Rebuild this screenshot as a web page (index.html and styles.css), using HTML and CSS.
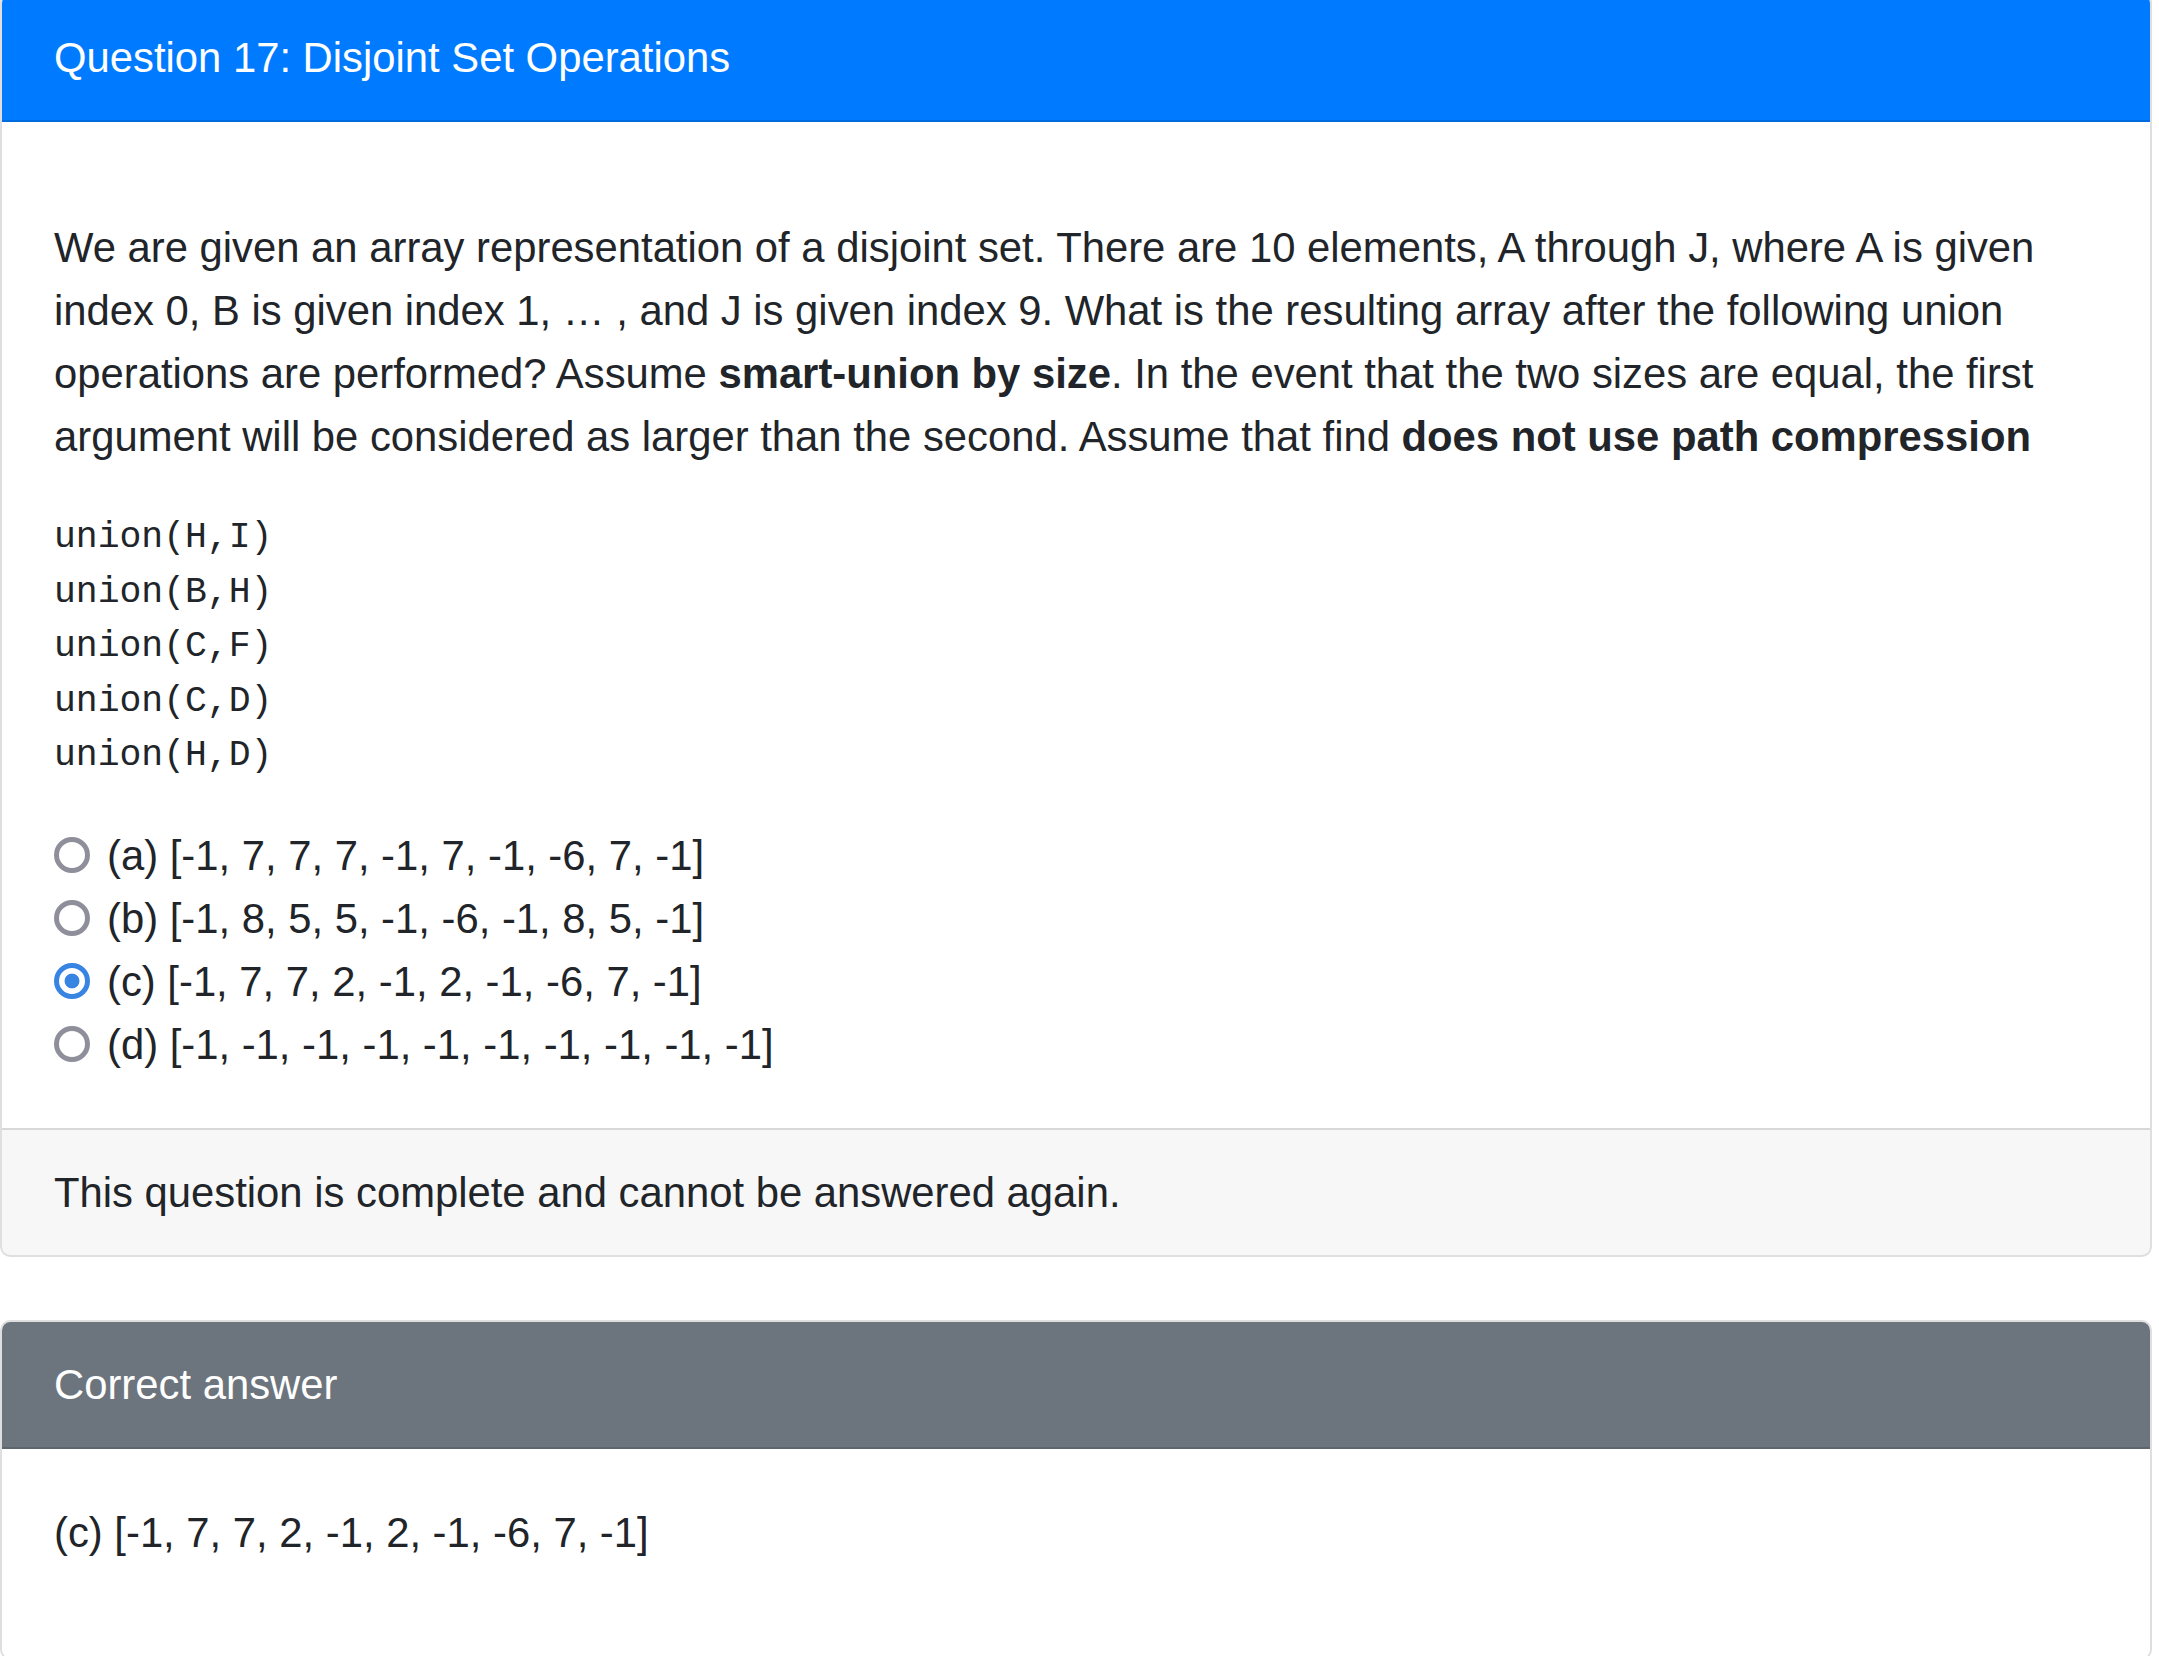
FILE: index.html
```html
<!DOCTYPE html>
<html lang="en">
<head>
<meta charset="utf-8">
<title>Question 17: Disjoint Set Operations</title>
<link rel="stylesheet" href="styles.css">
</head>
<body>
<div class="page">
  <section class="card">
    <div class="card-header header-primary">Question 17: Disjoint Set Operations</div>
    <div class="card-body">
      <p class="question">We are given an array representation of a disjoint set. There are 10 elements, A through J, where A is given index 0, B is given index 1, … , and J is given index 9. What is the resulting array after the following union operations are performed? Assume <strong>smart-union by size</strong>. In the event that the two sizes are equal, the first argument will be considered as larger than the second. Assume that find <strong>does not use path compression</strong></p>
<pre class="code">union(H,I)
union(B,H)
union(C,F)
union(C,D)
union(H,D)</pre>
      <div class="options">
        <label class="option"><input type="radio" name="q17" disabled><span>(a) [-1, 7, 7, 7, -1, 7, -1, -6, 7, -1]</span></label>
        <label class="option"><input type="radio" name="q17" disabled><span>(b) [-1, 8, 5, 5, -1, -6, -1, 8, 5, -1]</span></label>
        <label class="option"><input type="radio" name="q17" checked disabled><span>(c) [-1, 7, 7, 2, -1, 2, -1, -6, 7, -1]</span></label>
        <label class="option"><input type="radio" name="q17" disabled><span>(d) [-1, -1, -1, -1, -1, -1, -1, -1, -1, -1]</span></label>
      </div>
    </div>
    <div class="card-footer">This question is complete and cannot be answered again.</div>
  </section>

  <section class="card">
    <div class="card-header header-secondary">Correct answer</div>
    <div class="card-body">
      <p class="answer">(c) [-1, 7, 7, 2, -1, 2, -1, -6, 7, -1]</p>
    </div>
  </section>
</div>
</body>
</html>
```

FILE: styles.css
```css
html, body {
  margin: 0;
  padding: 0;
  background: #fff;
}

body {
  font-family: "Liberation Sans", Arial, Helvetica, sans-serif;
  font-size: 41.8px;
  line-height: 63px;
  color: #212529;
}

.page {
  margin-top: -7px;
  margin-right: 7px;
}

.card {
  display: flex;
  flex-direction: column;
  background: #fff;
  border: 2px solid rgba(0, 0, 0, 0.125);
  border-radius: 10.4px;
  overflow: hidden;
}

.card + .card {
  margin-top: 63px;
}

.card-header {
  padding: 31.2px 52px;
  border-bottom: 2px solid rgba(0, 0, 0, 0.125);
  color: #fff;
}

.header-primary {
  background: #007bff;
}

.header-secondary {
  background: #6c757d;
}

.card-body {
  padding: 52px;
}

.question {
  margin: 42px 0 42.6px;
}

.question strong {
  font-weight: bold;
}

.code {
  margin: 0 0 39.6px;
  font-family: "Liberation Mono", "Courier New", monospace;
  font-size: 36.4px;
  line-height: 54.6px;
  color: #212529;
}

.options {
  display: flex;
  flex-direction: column;
}

.option {
  display: flex;
  align-items: center;
  gap: 17px;
  height: 63px;
}

.option input {
  appearance: none;
  -webkit-appearance: none;
  box-sizing: border-box;
  width: 36px;
  height: 36px;
  margin: 0;
  border: 5px solid #8f8f9b;
  border-radius: 50%;
  background: #fff;
  flex: none;
}

.option input:checked {
  border: 5px solid #3884e3;
  background: radial-gradient(circle, #3884e3 0 7px, #fff 7.8px);
}

.card-footer {
  padding: 31.2px 52px;
  background: rgba(0, 0, 0, 0.03);
  border-top: 2px solid rgba(0, 0, 0, 0.125);
}

.answer {
  margin: 0 0 41.6px;
}
```
